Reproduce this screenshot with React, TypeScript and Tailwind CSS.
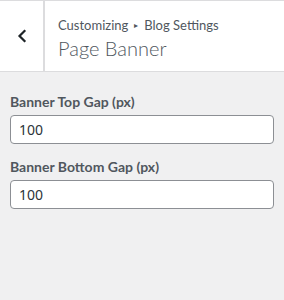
export default function App() {
    return (
        <div className="w-[284px] h-[300px] bg-[#f0f0f1] font-['Lato',sans-serif] text-[#50575e] border-t border-[#dcdcde]">
            {/* header */}
            <div className="flex h-[71px] bg-white border-b border-[#dcdcde]">
                <button className="w-[45px] flex items-center justify-center border-r-2 border-[#dcdcde] text-[#1d2327]">
                    <svg width="10" height="14" viewBox="0 0 10 14" fill="none">
                        <path d="M7.5 2 L2.5 7 L7.5 12" stroke="currentColor" strokeWidth="2.2" strokeLinecap="square" />
                    </svg>
                </button>
                <div className="flex-1 pl-[13px] pt-[15px]">
                    <div className="text-[13px] leading-[18px] flex items-center gap-[6px]">
                        <span>Customizing</span>
                        <span className="text-[8px]">▸</span>
                        <span>Blog Settings</span>
                    </div>
                    <h3 className="text-[20px] font-light leading-[26px] mt-[1px]">Page Banner</h3>
                </div>
            </div>

            {/* controls */}
            <div className="px-[10px] pt-[20px] flex flex-col gap-[13px]">
                <label className="flex flex-col gap-[3px]">
                    <span className="text-[14px] font-bold leading-[20px]">Banner Top Gap (px)</span>
                    <input
                        defaultValue="100"
                        className="h-[29px] w-[264px] px-[8px] bg-white border border-[#8c8f94] rounded-[4px] text-[14px] font-['Noto_Sans',sans-serif] text-[#2c3338] outline-none"
                    />
                </label>
                <label className="flex flex-col gap-[3px]">
                    <span className="text-[14px] font-bold leading-[20px]">Banner Bottom Gap (px)</span>
                    <input
                        defaultValue="100"
                        className="h-[29px] w-[264px] px-[8px] bg-white border border-[#8c8f94] rounded-[4px] text-[14px] font-['Noto_Sans',sans-serif] text-[#2c3338] outline-none"
                    />
                </label>
            </div>
        </div>
    );
}
